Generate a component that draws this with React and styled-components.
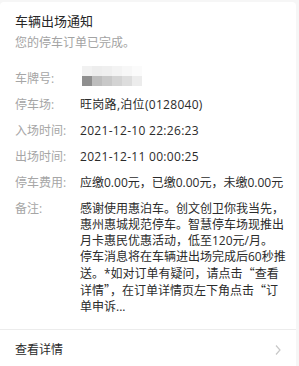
import styled, { createGlobalStyle } from 'styled-components';

const GlobalStyle = createGlobalStyle`
  body {
    margin: 0;
    background: #f6f6f6;
    font-family: "Open Sans", "Noto Sans CJK SC", sans-serif;
  }
`;

const Card = styled.div`
  width: 296px;
  margin-top: 2px;
  background: #fff;
  border-radius: 4px;
  overflow: hidden;
`;

const Header = styled.div`
  padding: 10px 15px 0;
`;

const Title = styled.div`
  font-size: 13px;
  line-height: 18px;
  color: #262626;
`;

const Subtitle = styled.div`
  margin-top: 4px;
  font-size: 12px;
  line-height: 18px;
  color: #a3a3a3;
`;

const Rows = styled.div`
  display: flex;
  flex-direction: column;
  gap: 10px;
  padding: 19px 15px 14px;
`;

const Row = styled.div`
  display: flex;
  align-items: flex-start;
  font-size: 12px;
  line-height: 16px;
`;

const Label = styled.div`
  width: 65px;
  flex: none;
  color: #a6a6a6;
`;

const Value = styled.div`
  color: #2b2b2b;
  white-space: nowrap;
  letter-spacing: ${p => (p.$wide ? '0.3px' : '0')};
`;

const Quote = styled.span`
  font-family: "Noto Sans CJK SC", sans-serif;
`;

const Plate = styled.svg`
  display: block;
  margin: -6px 0;
`;

const Footer = styled.div`
  display: flex;
  align-items: center;
  justify-content: space-between;
  border-top: 1px solid #ececec;
  padding: 12px 14px 12px 15px;
  font-size: 12px;
  line-height: 16px;
  color: #2b2b2b;
`;

const rows = [
  ['停车场:', '旺岗路,泊位(0128040)', true],
  ['入场时间:', '2021-12-10 22:26:23', true],
  ['出场时间:', '2021-12-11 00:00:25', true],
  ['停车费用:', '应缴0.00元，已缴0.00元，未缴0.00元', false],
];

const notes = [
  ['感谢使用惠泊车。创文创卫你我当先，'],
  ['惠州惠城规范停车。智慧停车场现推出'],
  ['月卡惠民优惠活动，低至120元/月。'],
  ['停车消息将在车辆进出场完成后60秒推'],
  ['送。*如对订单有疑问，请点击', '“', '查看'],
  ['详情', '”', '，在订单详情页左下角点击', '“', '订'],
  ['单申诉...'],
];

const top = ['#f1f1f1', '#ededed', '#efefef', '#f3f3f3', '#f7f7f7', '#fbfbfb'];
const bottom = ['#8f8f8f', '#bdbdbd', '#c8c8c8', '#d3d3d3', '#dddddd', '#ececec'];

export default function App() {
  return (
    <>
      <GlobalStyle />
      <Card>
        <Header>
          <Title>车辆出场通知</Title>
          <Subtitle>您的停车订单已完成。</Subtitle>
        </Header>
        <Rows>
          <Row>
            <Label>车牌号:</Label>
            <Value>
              <Plate width="62" height="22" viewBox="0 0 62 22">
                {top.map((c, i) => <rect key={'t' + i} x={2 + i * 10} y="1" width="10" height="10" fill={c} />)}
                {bottom.map((c, i) => <rect key={'b' + i} x={2 + i * 10} y="11" width="10" height="10" fill={c} />)}
              </Plate>
            </Value>
          </Row>
          {rows.map(([l, v, wide]) => (
            <Row key={l}>
              <Label>{l}</Label>
              <Value $wide={wide}>{v}</Value>
            </Row>
          ))}
          <Row>
            <Label>备注:</Label>
            <Value>
              {notes.map((parts, i) => (
                <div key={i}>
                  {parts.map((p, j) =>
                    p === '“' || p === '”' ? <Quote key={j}>{p}</Quote> : p
                  )}
                </div>
              ))}
            </Value>
          </Row>
        </Rows>
        <Footer>
          查看详情
          <svg width="8" height="12" viewBox="0 0 8 12">
            <polyline points="2,1.5 6,6 2,10.5" fill="none" stroke="#c8c8c8" strokeWidth="1.2" />
          </svg>
        </Footer>
      </Card>
    </>
  );
}
